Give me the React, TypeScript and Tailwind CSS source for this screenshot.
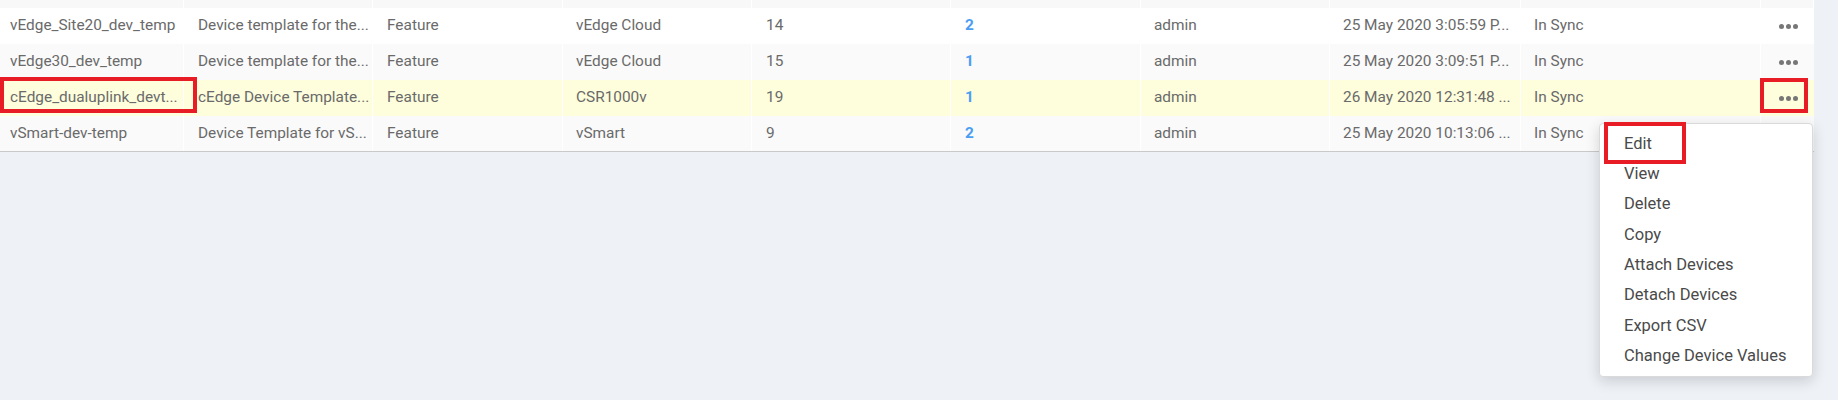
import React from "react";

type Row = {
  name: string;
  desc: string;
  type: string;
  model: string;
  features: string;
  devices: string;
  by: string;
  updated: string;
  status: string;
  bg: string;
};

const rows: Row[] = [
  {
    name: "vEdge_Site20_dev_temp",
    desc: "Device template for the...",
    type: "Feature",
    model: "vEdge Cloud",
    features: "14",
    devices: "2",
    by: "admin",
    updated: "25 May 2020 3:05:59 P...",
    status: "In Sync",
    bg: "bg-white",
  },
  {
    name: "vEdge30_dev_temp",
    desc: "Device template for the...",
    type: "Feature",
    model: "vEdge Cloud",
    features: "15",
    devices: "1",
    by: "admin",
    updated: "25 May 2020 3:09:51 P...",
    status: "In Sync",
    bg: "bg-[#fafafa]",
  },
  {
    name: "cEdge_dualuplink_devt...",
    desc: "cEdge Device Template...",
    type: "Feature",
    model: "CSR1000v",
    features: "19",
    devices: "1",
    by: "admin",
    updated: "26 May 2020 12:31:48 ...",
    status: "In Sync",
    bg: "bg-[#fefedd]",
  },
  {
    name: "vSmart-dev-temp",
    desc: "Device Template for vS...",
    type: "Feature",
    model: "vSmart",
    features: "9",
    devices: "2",
    by: "admin",
    updated: "25 May 2020 10:13:06 ...",
    status: "In Sync",
    bg: "bg-[#fafafa]",
  },
];

const menuItems = [
  "Edit",
  "View",
  "Delete",
  "Copy",
  "Attach Devices",
  "Detach Devices",
  "Export CSV",
  "Change Device Values",
];

// column widths taken from the screenshot
const cols = [
  "w-[184px] pl-[10px]",
  "w-[189px] pl-[14px]",
  "w-[190px] pl-[14px]",
  "w-[189px] pl-[13px]",
  "w-[199px] pl-[14px]",
  "w-[190px] pl-[14px]",
  "w-[189px] pl-[13px]",
  "w-[191px] pl-[13px]",
  "w-[240px] pl-[13px]",
  "w-[53px]",
];

function Dots() {
  return (
    <div className="flex items-center gap-[2px]">
      <span className="h-[5px] w-[5px] rounded-full bg-[#777]" />
      <span className="h-[5px] w-[5px] rounded-full bg-[#777]" />
      <span className="h-[5px] w-[5px] rounded-full bg-[#777]" />
    </div>
  );
}

export default function App() {
  return (
    <div
      className="relative h-[400px] w-[1838px] overflow-hidden bg-[#eef2f7] text-[15.4px] text-[#6a6a6a]"
      style={{ fontFamily: "Roboto, 'Liberation Sans', sans-serif" }}
    >
      <div className="w-[1814px]">
        {/* tail of the previous row */}
        <div className="flex h-[8px] bg-[#f8f8f8]">
          {cols.map((c, i) => (
            <div key={i} className={`${c} border-r border-white`} />
          ))}
        </div>

        {rows.map((r, idx) => {
          const cells = [r.name, r.desc, r.type, r.model, r.features, r.devices, r.by, r.updated, r.status];
          return (
            <div
              key={idx}
              className={`flex h-[36px] ${r.bg} ${idx === rows.length - 1 ? "border-b border-[#c9c9c9]" : ""}`}
            >
              {cells.map((v, i) => (
                <div
                  key={i}
                  className={`${cols[i]} flex shrink-0 items-center overflow-hidden whitespace-nowrap border-r border-white`}
                >
                  {i === 5 ? (
                    <span className="font-bold text-[#4b9ef3]">{v}</span>
                  ) : (
                    <span>{v}</span>
                  )}
                </div>
              ))}
              <div className={`${cols[9]} flex shrink-0 items-center justify-center pl-[2px]`}>
                <Dots />
              </div>
            </div>
          );
        })}
      </div>

      {/* action menu */}
      <div className="absolute left-[1599px] top-[123px] w-[214px] rounded-[4px] border border-[#dadada] bg-white py-[5px] text-[16.5px] text-[#4a4a4a] shadow-[0_4px_14px_rgba(0,0,0,0.16)]">
        {menuItems.map((m) => (
          <div key={m} className="flex h-[30.3px] items-center pl-[24px] whitespace-nowrap">
            {m}
          </div>
        ))}
      </div>

      {/* red annotation boxes */}
      <div className="pointer-events-none absolute left-0 top-[77px] h-[36px] w-[197px] border-4 border-[#e81c24]" />
      <div className="pointer-events-none absolute left-[1760px] top-[78px] h-[35px] w-[48px] border-4 border-[#e81c24]" />
      <div className="pointer-events-none absolute left-[1604px] top-[122px] h-[42px] w-[82px] border-4 border-[#e81c24]" />
    </div>
  );
}
